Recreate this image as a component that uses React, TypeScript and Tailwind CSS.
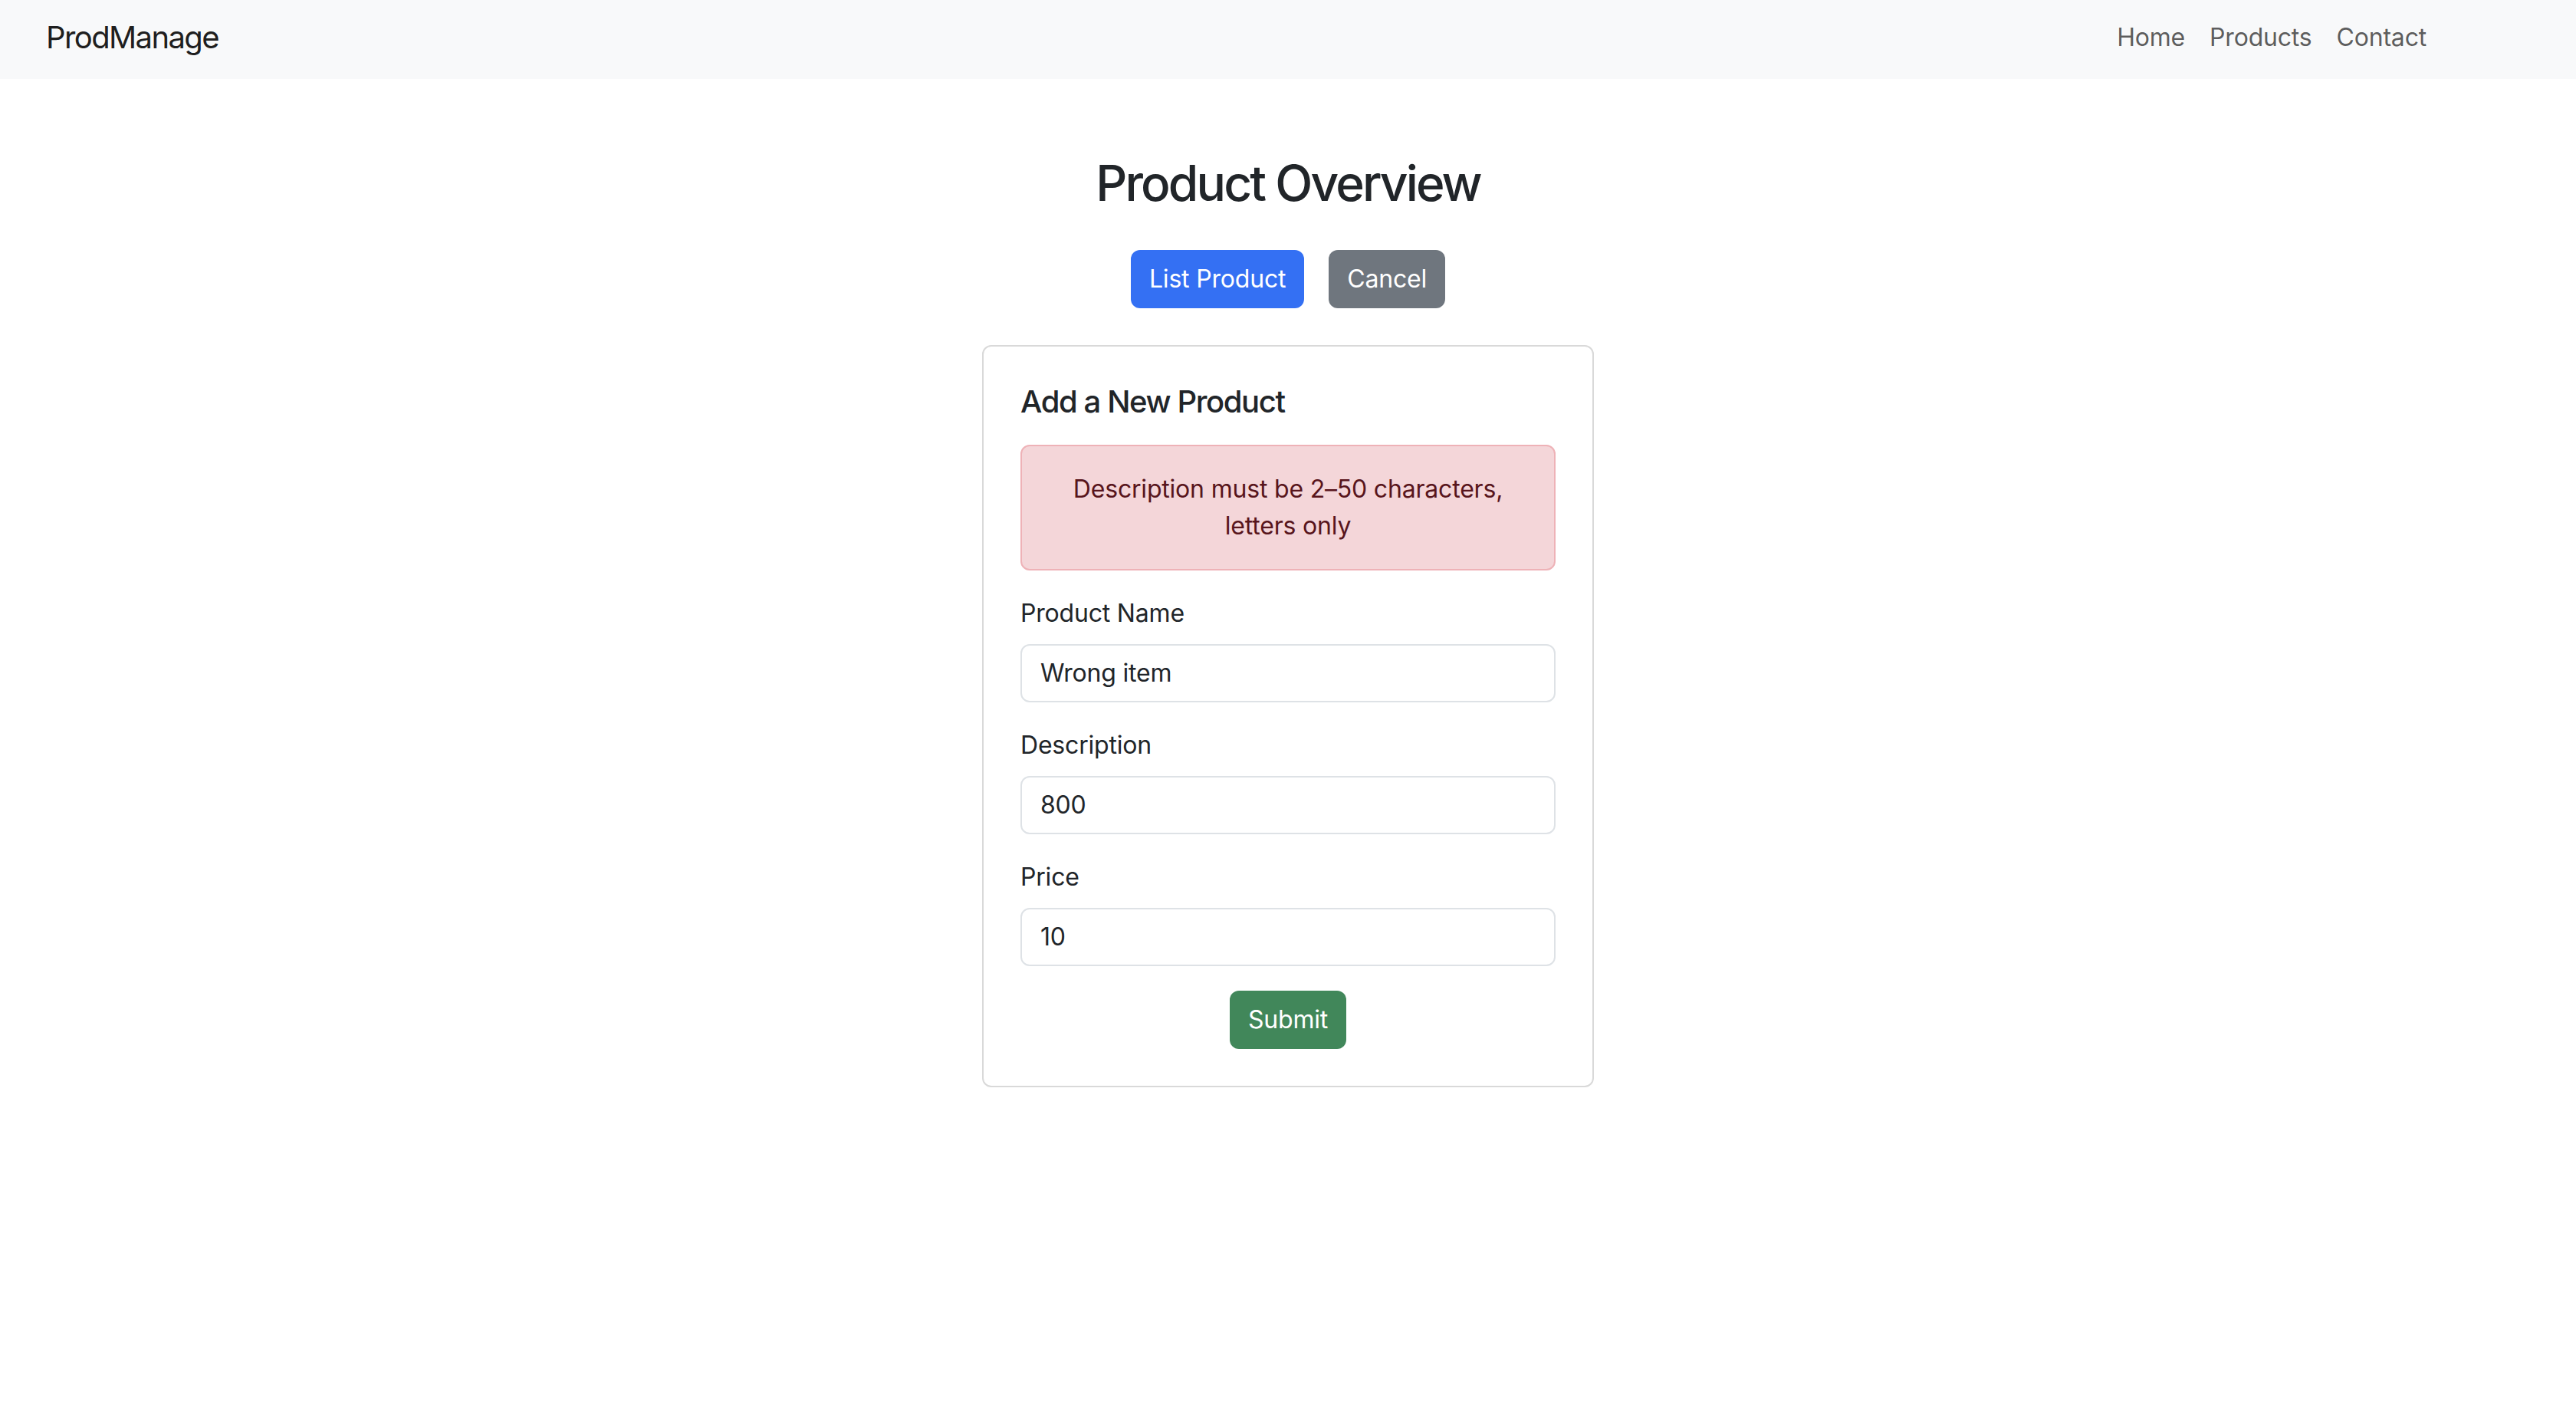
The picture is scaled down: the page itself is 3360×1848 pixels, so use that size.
const fields = [
  { label: "Product Name", value: "Wrong item" },
  { label: "Description", value: "800" },
  { label: "Price", value: "10" },
];

export default function App() {
  return (
    <div className="min-h-screen bg-white font-['Inter',sans-serif] text-[#212529] tracking-[-0.012em]">
      <nav className="h-[103px] bg-[#f8f9fa] flex items-center justify-between pl-[60px] pr-[179px] pb-[6px]">
        <a href="#" className="text-[40px] leading-[60px] text-black/90 tracking-[-0.04em]">
          ProdManage
        </a>
        <ul className="flex">
          {["Home", "Products", "Contact"].map((item) => (
            <li key={item}>
              <a href="#" className="block px-[16px] text-[32px] leading-[48px] text-black/65">
                {item}
              </a>
            </li>
          ))}
        </ul>
      </nav>

      <main className="flex flex-col items-center pt-[98px]">
        <h1 className="text-[64px] leading-[1.2] font-medium mb-[48px] tracking-[-0.045em]">
          Product Overview
        </h1>

        <div className="flex gap-[32px] mb-[48px]">
          <button className="h-[76px] px-[24px] rounded-[12px] bg-[#3470f3] text-white text-[32px]">
            List Product
          </button>
          <button className="h-[76px] px-[24px] rounded-[12px] bg-[#6f767e] text-white text-[32px]">
            Cancel
          </button>
        </div>

        <div className="w-[798px] border-2 border-[#d9d9d9] rounded-[12px] p-[48px]">
          <h5 className="text-[40px] leading-[48px] font-medium mb-[32px] tracking-[-0.035em]">
            Add a New Product
          </h5>

          <div className="border-2 border-[#eeb2b7] bg-[#f4d6d9] text-[#58151c] rounded-[12px] p-[32px] text-center text-[32px] leading-[48px] mb-[32px]">
            Description must be 2–50 characters, letters only
          </div>

          <form className="flex flex-col">
            {fields.map((f) => (
              <div key={f.label} className="mb-[32px]">
                <label className="block text-[32px] leading-[48px] mb-[16px]">{f.label}</label>
                <input
                  defaultValue={f.value}
                  className="w-full h-[76px] border-2 border-[#dee2e6] rounded-[12px] px-[24px] text-[32px] text-[#212529] outline-none"
                />
              </div>
            ))}
            <div className="flex justify-center">
              <button
                type="button"
                className="h-[76px] px-[24px] rounded-[12px] bg-[#41875a] text-white text-[32px]"
              >
                Submit
              </button>
            </div>
          </form>
        </div>
      </main>
    </div>
  );
}
